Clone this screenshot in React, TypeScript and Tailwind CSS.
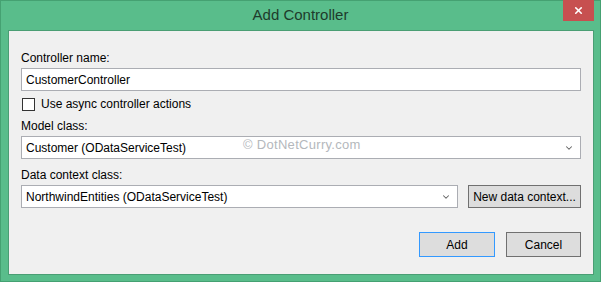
import { ChevronDown, X } from "lucide-react";

const font = { fontFamily: '"Segoe UI", "Liberation Sans", Arial, sans-serif' };

function Label({ children, className = "" }: { children: string; className?: string }) {
  return <div className={`h-4 text-[12px] leading-4 text-black ${className}`}>{children}</div>;
}

function Select({ value, className = "" }: { value: string; className?: string }) {
  return (
    <div className={`flex h-[23px] items-center justify-between border border-[#abadb3] bg-white pl-[4px] pr-[6px] text-[12px] text-black ${className}`}>
      <span>{value}</span>
      <ChevronDown size={10} strokeWidth={2.5} className="text-[#606060]" />
    </div>
  );
}

function Button({ children, focused = false, className = "" }: { children: string; focused?: boolean; className?: string }) {
  return (
    <button
      type="button"
      className={`flex items-center justify-center border bg-[#dddddd] text-[12px] text-black ${focused ? "border-[#3399ff]" : "border-[#707070]"} ${className}`}
    >
      {children}
    </button>
  );
}

export default function App() {
  return (
    <div className="h-[282px] w-[601px] overflow-hidden" style={font}>
      <div className="flex h-full w-full flex-col border border-[#45a172] bg-[#59bd8b]">
        <div className="relative flex h-[29px] shrink-0 items-center justify-center">
          <span className="text-[15px] text-[#1e3b2c]">Add Controller</span>
          <div className="absolute right-[6px] top-[-1px] flex h-[21px] w-[31px] items-center justify-center bg-[#c75050]">
            <X size={11} strokeWidth={3.5} className="text-white" />
          </div>
        </div>
        <div className="mb-[6px] ml-[7px] mr-[6px] flex flex-1 flex-col border border-[#4a9e74] bg-[#f0f0f0] pl-[12px] pr-[12px] pt-[19px]">
          <Label>Controller name:</Label>
          <div className="mt-[2px] flex h-[23px] items-center border border-[#abadb3] bg-white pl-[4px] text-[12px] text-black">
            CustomerController
          </div>
          <div className="mt-[5px] flex h-4 items-center gap-[6px] pl-[1px]">
            <div className="h-[13px] w-[13px] border border-[#333333] bg-white" />
            <span className="text-[12px] text-black">Use async controller actions</span>
          </div>
          <Label className="mt-[6px]">Model class:</Label>
          <div className="relative">
            <Select value="Customer (ODataServiceTest)" className="mt-[2px]" />
            <span
              className="pointer-events-none absolute left-[222px] top-[1px] text-[13px] tracking-[0.3px] text-[#b4b8bc]"
              style={{ textShadow: "1px 1px 0 #ffffff", fontFamily: '"Liberation Sans", Arial, sans-serif' }}
            >
              © DotNetCurry.com
            </span>
          </div>
          <Label className="mt-[8px]">Data context class:</Label>
          <div className="mt-[2px] flex gap-[10px]">
            <Select value="NorthwindEntities (ODataServiceTest)" className="w-[437px]" />
            <Button className="h-[23px] w-[113px]">New data context...</Button>
          </div>
          <div className="mt-[24px] flex justify-end gap-[11px]">
            <Button focused className="h-[25px] w-[76px]">Add</Button>
            <Button className="h-[25px] w-[75px]">Cancel</Button>
          </div>
        </div>
      </div>
    </div>
  );
}
